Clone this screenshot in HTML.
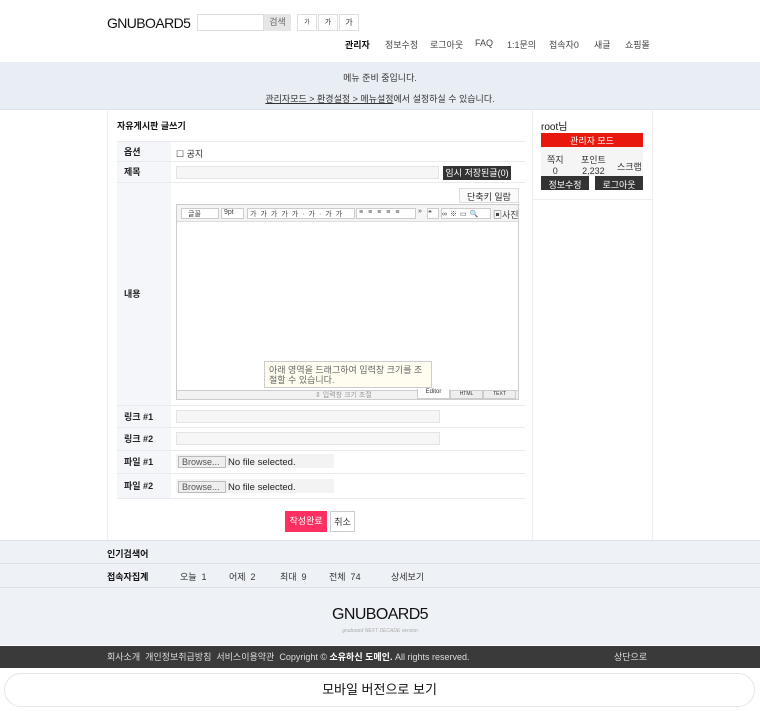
<!DOCTYPE html>
<html><head><meta charset="utf-8"><style>
*{box-sizing:border-box;margin:0;padding:0}
body{width:760px;height:711px;font-family:"Liberation Sans","Noto Sans CJK KR",sans-serif;font-size:9px;color:#333;background:#fff;position:relative;overflow:hidden}
.a{position:absolute;white-space:nowrap}
.logo{font-size:14px;letter-spacing:-0.6px;color:#111}
.nav span{position:absolute;top:38px;font-size:9px;color:#444}
.th{position:absolute;left:117px;width:54px;background:#f4f6f9;font-weight:bold;font-size:9px;padding-left:7px;color:#222;border-bottom:1px solid #e8eaee}
.row{position:absolute;left:117px;width:408px;border-bottom:1px solid #e8eaee}
.inp{position:absolute;background:#f6f6f6;border:1px solid #e4e4e4}
.file{position:absolute;left:176px;width:158px;height:14px;background:#f3f3f3}
.file b{position:absolute;left:2px;top:2px;width:48px;height:12px;border:1px solid #bbb;background:#eee;font-weight:normal;font-size:9px;color:#555;padding-left:3px;line-height:11px}
.file i{position:absolute;left:52px;top:3px;font-style:normal;font-size:9.5px;color:#222}
</style></head><body>
<div class="a logo" style="left:107px;top:15px">GNUBOARD5</div>
<div class="a" style="left:197px;top:14px;width:67px;height:17px;border:1px solid #ddd"></div>
<div class="a" style="left:264px;top:14px;width:27px;height:17px;background:#e6e6e6;color:#666;font-size:9px;text-align:center;line-height:17px">검색</div>
<div class="a" style="left:297px;top:14px;width:20px;height:17px;border:1px solid #ddd;font-size:6px;text-align:center;line-height:16px">가</div>
<div class="a" style="left:318px;top:14px;width:20px;height:17px;border:1px solid #ddd;font-size:7px;text-align:center;line-height:16px">가</div>
<div class="a" style="left:339px;top:14px;width:20px;height:17px;border:1px solid #ddd;font-size:8px;text-align:center;line-height:16px">가</div>
<div class="nav"><span style="left:345px;font-weight:bold;color:#111">관리자</span><span style="left:385px">정보수정</span><span style="left:430px">로그아웃</span><span style="left:475px">FAQ</span><span style="left:507px">1:1문의</span><span style="left:549px">접속자0</span><span style="left:594px">새글</span><span style="left:625px">쇼핑몰</span></div>
<div class="a" style="left:0;top:62px;width:760px;height:48px;background:#e9eef5;border-bottom:1px solid #dde3ec;text-align:center;font-size:9px;color:#333">
<div style="margin-top:9px">메뉴 준비 중입니다.</div>
<div style="margin-top:8px"><u>관리자모드 &gt; 환경설정 &gt; 메뉴설정</u>에서 설정하실 수 있습니다.</div></div>
<div class="a" style="left:107px;top:110px;width:426px;height:430px;background:#fff;border-right:1px solid #eee;border-left:1px solid #eee"></div>
<div class="a" style="left:533px;top:110px;width:120px;height:430px;background:#fff;border-right:1px solid #eee"></div>
<div class="a" style="left:533px;top:199px;width:120px;border-top:1px solid #eee"></div>
<div class="a" style="left:117px;top:119px;font-weight:bold;font-size:9px;color:#111">자유게시판 글쓰기</div>
<div class="a" style="left:117px;top:141px;width:408px;border-top:1px solid #e8eaee"></div>
<div class="th" style="top:142px;height:20px;line-height:20px">옵션</div><div class="row" style="top:142px;height:20px"></div>
<div class="a" style="left:176px;top:147px;font-size:9px">☐ 공지</div>
<div class="th" style="top:162px;height:21px;line-height:21px">제목</div><div class="row" style="top:162px;height:21px"></div>
<div class="inp" style="left:176px;top:166px;width:263px;height:13px"></div>
<div class="a" style="left:443px;top:166px;width:68px;height:14px;background:#333;color:#fff;font-size:9px;text-align:center;line-height:14px">임시 저장된글(0)</div>
<div class="th" style="top:183px;height:223px;line-height:223px">내용</div><div class="row" style="top:183px;height:223px"></div>
<div class="a" style="left:459px;top:188px;width:60px;height:15px;border:1px solid #ddd;background:#fafafa;font-size:9px;text-align:center;line-height:17px">단축키 일람</div>
<div class="a" style="left:176px;top:204px;width:343px;height:196px;border:1px solid #ccc;background:#fff"></div>
<div class="a" style="left:177px;top:205px;width:341px;height:17px;background:#f4f4f4;border-bottom:1px solid #ddd;font-size:7px;color:#444">
<span class="a" style="left:4px;top:3px;width:38px;height:11px;border:1px solid #ccc;background:#fff;padding-left:6px">글꼴</span>
<span class="a" style="left:44px;top:3px;width:23px;height:11px;border:1px solid #ccc;background:#fff;padding-left:2px">9pt</span>
<span class="a" style="left:70px;top:3px;width:108px;height:11px;border:1px solid #ccc;background:#fff;letter-spacing:4px;padding-left:2px">가가가가가·가·가가</span>
<span class="a" style="left:179px;top:3px;width:60px;height:11px;border:1px solid #ccc;background:#fff;letter-spacing:5px;padding-left:2px">≡≡≡≡≡</span>
<span class="a" style="left:241px;top:3px">»</span>
<span class="a" style="left:250px;top:3px;width:12px;height:11px;border:1px solid #ccc;background:#fff">❝</span>
<span class="a" style="left:264px;top:3px;width:50px;height:11px;border:1px solid #ccc;background:#fff;letter-spacing:3px">∞※▭🔍</span>
<span class="a" style="left:316px;top:3px;font-size:9px">▣사진</span></div>
<div class="a" style="left:264px;top:361px;width:168px;height:27px;background:#fffdf0;border:1px solid #ccc;font-size:9px;color:#666;padding:3px 4px;line-height:10px;white-space:normal">아래 영역을 드래그하여 입력창 크기를 조절할 수 있습니다.</div>
<div class="a" style="left:177px;top:390px;width:341px;height:9px;background:#f2f2f2;border-top:1px solid #ccc;font-size:7px;color:#999;text-align:left;padding-left:138px;line-height:10px">⇕ 입력창 크기 조절</div>
<div class="a" style="left:417px;top:389px;width:33px;height:10px;background:#fff;border:1px solid #ccc;border-top:none;font-size:6px;text-align:center">Editor</div>
<div class="a" style="left:450px;top:390px;width:33px;height:9px;background:#eee;border:1px solid #ccc;font-size:5px;text-align:center">HTML</div>
<div class="a" style="left:483px;top:390px;width:33px;height:9px;background:#eee;border:1px solid #ccc;font-size:5px;text-align:center">TEXT</div>
<div class="th" style="top:406px;height:22px;line-height:22px">링크 #1</div><div class="row" style="top:406px;height:22px"></div>
<div class="inp" style="left:176px;top:410px;width:264px;height:13px"></div>
<div class="th" style="top:428px;height:23px;line-height:23px">링크 #2</div><div class="row" style="top:428px;height:23px"></div>
<div class="inp" style="left:176px;top:432px;width:264px;height:13px"></div>
<div class="th" style="top:451px;height:23px;line-height:23px">파일 #1</div><div class="row" style="top:451px;height:23px"></div>
<div class="file" style="top:454px"><b>Browse...</b><i>No file selected.</i></div>
<div class="th" style="top:474px;height:25px;line-height:25px">파일 #2</div><div class="row" style="top:474px;height:25px"></div>
<div class="file" style="top:479px"><b>Browse...</b><i>No file selected.</i></div>
<div class="a" style="left:285px;top:511px;width:42px;height:21px;background:#ff3061;color:#fff;font-size:9px;text-align:center;line-height:21px">작성완료</div>
<div class="a" style="left:330px;top:511px;width:25px;height:21px;border:1px solid #ccc;background:#fff;font-size:9px;text-align:center;line-height:20px">취소</div>
<div class="a" style="left:541px;top:118px;font-size:10px;color:#111">root님</div>
<div class="a" style="left:541px;top:133px;width:102px;height:14px;background:#e8180c;color:#fff;font-size:9px;text-align:center;line-height:16px">관리자 모드</div>
<div class="a" style="left:541px;top:147px;width:102px;height:29px;background:#f5f5f5;font-size:9px">
<span class="a" style="left:6px;top:6px;text-align:center">쪽지<br>0</span>
<span class="a" style="left:40px;top:6px;text-align:center">포인트<br>2,232</span>
<span class="a" style="left:76px;top:13px">스크랩</span></div>
<div class="a" style="left:541px;top:176px;width:48px;height:14px;background:#333;color:#fff;font-size:9px;text-align:center;line-height:18px;overflow:hidden">정보수정</div>
<div class="a" style="left:595px;top:176px;width:48px;height:14px;background:#333;color:#fff;font-size:9px;text-align:center;line-height:18px;overflow:hidden">로그아웃</div>
<div class="a" style="left:0;top:540px;width:760px;height:105px;background:#eef1f6;border-top:1px solid #dde2ea"></div>
<div class="a" style="left:0;top:563px;width:760px;border-top:1px solid #dde2ea"></div>
<div class="a" style="left:0;top:587px;width:760px;border-top:1px solid #dde2ea"></div>
<div class="a" style="left:107px;top:547px;font-weight:bold;font-size:9px;color:#111">인기검색어</div>
<div class="a" style="left:107px;top:570px;font-size:9px;color:#111"><b>접속자집계</b></div>
<div class="a" style="left:180px;top:570px;font-size:9px">오늘 &nbsp;1</div>
<div class="a" style="left:229px;top:570px;font-size:9px">어제 &nbsp;2</div>
<div class="a" style="left:280px;top:570px;font-size:9px">최대 &nbsp;9</div>
<div class="a" style="left:329px;top:570px;font-size:9px">전체 &nbsp;74</div>
<div class="a" style="left:391px;top:570px;font-size:9px">상세보기</div>
<div class="a logo" style="left:0;width:760px;text-align:center;top:606px;font-size:16px;color:#111">GNUBOARD5</div>
<div class="a" style="left:0;width:760px;text-align:center;top:628px;font-size:5px;color:#aaa;font-style:italic">gnuboard NEXT DECADE version</div>
<div class="a" style="left:0;top:646px;width:760px;height:22px;background:#3a3a3a;color:#ddd;font-size:9px;line-height:22px">
<span class="a" style="left:107px">회사소개 &nbsp;개인정보취급방침 &nbsp;서비스이용약관 &nbsp;Copyright © <b style="color:#fff">소유하신 도메인.</b> All rights reserved.</span>
<span class="a" style="left:614px">상단으로</span></div>
<div class="a" style="left:4px;top:673px;width:751px;height:34px;border:1px solid #e6e6e6;border-radius:17px;background:#fff;text-align:center;line-height:32px;font-size:13px;color:#111">모바일 버전으로 보기</div>
</body></html>
